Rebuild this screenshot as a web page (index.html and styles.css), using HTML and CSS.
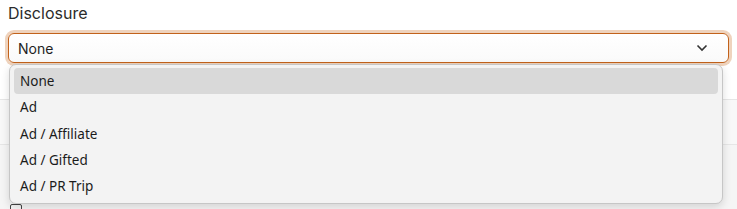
FILE: index.html
```html
<!DOCTYPE html>
<html lang="en">
<head>
    <meta charset="UTF-8">
    <title>Disclosure</title>
    <link rel="stylesheet" href="styles.css">
</head>
<body>
    <div class="field">
        <label class="field-label">Disclosure</label>
        <div class="select-wrap">
            <div class="select">
                <span class="select-value">None</span>
                <svg class="chevron" width="12" height="8" viewBox="0 0 12 8">
                    <path d="M1.5 1.5 L6 6 L10.5 1.5" fill="none" stroke="#333" stroke-width="1.6"/>
                </svg>
            </div>
            <ul class="menu">
                <li class="menu-item active">None</li>
                <li class="menu-item">Ad</li>
                <li class="menu-item">Ad / Affiliate</li>
                <li class="menu-item">Ad / Gifted</li>
                <li class="menu-item">Ad / PR Trip</li>
            </ul>
        </div>
    </div>

    <div class="below">
        <div class="below-row"></div>
        <div class="below-row">
            <span class="check"></span>
        </div>
    </div>
</body>
</html>
```

FILE: styles.css
```css
body {
    font-family: Inter, 'Noto Sans', sans-serif;
    margin: 0;
    padding: 0 8px;
    background: #fff;
    color: #333;
    overflow: hidden;
}

.field {
    padding-top: 3px;
}

.field-label {
    display: block;
    font-size: 16px;
    line-height: 20px;
    color: #2b2b2b;
    margin-bottom: 10px;
}

.select-wrap {
    position: relative;
}

.select {
    display: flex;
    align-items: center;
    justify-content: space-between;
    height: 28px;
    padding: 0 20px 0 9px;
    border: 1px solid #c2621b;
    border-radius: 6px;
    box-shadow: 0 0 0 3px #efd3bd;
    background: linear-gradient(#fff, #fafafa);
}

.select-value {
    font-size: 14px;
    color: #1f1f1f;
}

.chevron {
    display: block;
}

.menu {
    position: absolute;
    top: 31px;
    left: 1px;
    right: 6px;
    margin: 0;
    padding: 3px 4px 4px;
    list-style: none;
    background: #f3f3f3;
    border: 1px solid #c6c6c6;
    border-radius: 7px;
    box-shadow: 0 3px 8px rgba(0,0,0,0.14);
    z-index: 10;
    font-family: 'Noto Sans', 'Open Sans', sans-serif;
}

.menu-item {
    height: 26.3px;
    line-height: 26px;
    padding: 0 6px;
    font-size: 13.5px;
    color: #1b1b1b;
    border-radius: 4px;
}

.menu-item.active {
    background: #d9d9d9;
}

.below {
    margin: 36px -8px 0;
}

.below-row {
    border-top: 1px solid #e6e6e6;
    background: #f8f8f8;
    height: 44px;
    padding: 0 10px;
}

.below-row + .below-row {
    background: #f5f5f5;
    height: 64px;
    display: flex;
    align-items: flex-end;
}

.check {
    width: 10px;
    height: 10px;
    margin-bottom: -7px;
    border: 1px solid #444;
    border-radius: 2px;
}
```
